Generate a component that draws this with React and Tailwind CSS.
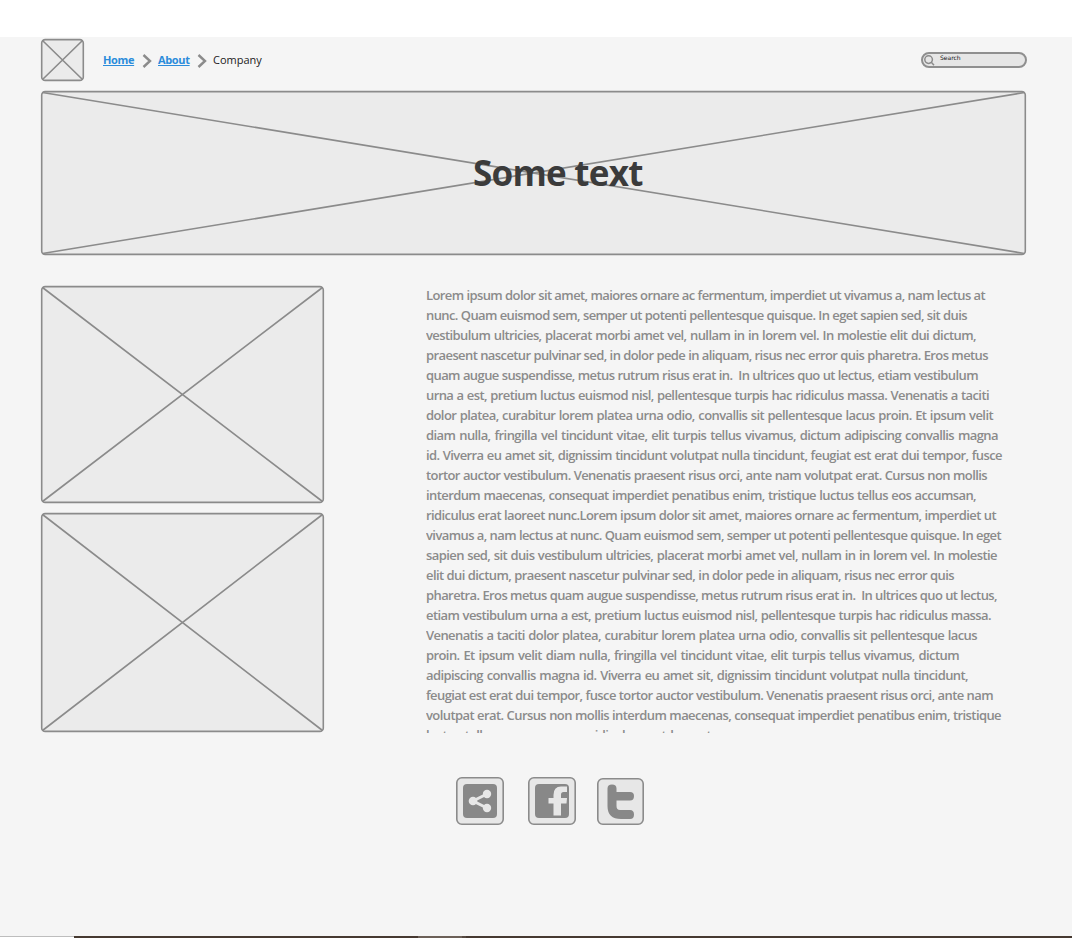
const lines = [
  [559, "Lorem ipsum dolor sit amet, maiores ornare ac fermentum, imperdiet ut vivamus a, nam lectus at"],
  [541, "nunc. Quam euismod sem, semper ut potenti pellentesque quisque. In eget sapien sed, sit duis"],
  [550, "vestibulum ultricies, placerat morbi amet vel, nullam in in lorem vel. In molestie elit dui dictum,"],
  [562, "praesent nascetur pulvinar sed, in dolor pede in aliquam, risus nec error quis pharetra. Eros metus"],
  [552, "quam augue suspendisse, metus rutrum risus erat in.\u00a0 In ultrices quo ut lectus, etiam vestibulum"],
  [563, "urna a est, pretium luctus euismod nisl, pellentesque turpis hac ridiculus massa. Venenatis a taciti"],
  [567, "dolor platea, curabitur lorem platea urna odio, convallis sit pellentesque lacus proin. Et ipsum velit"],
  [572, "diam nulla, fringilla vel tincidunt vitae, elit turpis tellus vivamus, dictum adipiscing convallis magna"],
  [576, "id. Viverra eu amet sit, dignissim tincidunt volutpat nulla tincidunt, feugiat est erat dui tempor, fusce"],
  [561, "tortor auctor vestibulum. Venenatis praesent risus orci, ante nam volutpat erat. Cursus non mollis"],
  [550, "interdum maecenas, consequat imperdiet penatibus enim, tristique luctus tellus eos accumsan,"],
  [570, "ridiculus erat laoreet nunc.Lorem ipsum dolor sit amet, maiores ornare ac fermentum, imperdiet ut"],
  [575, "vivamus a, nam lectus at nunc. Quam euismod sem, semper ut potenti pellentesque quisque. In eget"],
  [571, "sapien sed, sit duis vestibulum ultricies, placerat morbi amet vel, nullam in in lorem vel. In molestie"],
  [528, "elit dui dictum, praesent nascetur pulvinar sed, in dolor pede in aliquam, risus nec error quis"],
  [571, "pharetra. Eros metus quam augue suspendisse, metus rutrum risus erat in.\u00a0 In ultrices quo ut lectus,"],
  [565, "etiam vestibulum urna a est, pretium luctus euismod nisl, pellentesque turpis hac ridiculus massa."],
  [551, "Venenatis a taciti dolor platea, curabitur lorem platea urna odio, convallis sit pellentesque lacus"],
  [533, "proin. Et ipsum velit diam nulla, fringilla vel tincidunt vitae, elit turpis tellus vivamus, dictum"],
  [542, "adipiscing convallis magna id. Viverra eu amet sit, dignissim tincidunt volutpat nulla tincidunt,"],
  [567, "feugiat est erat dui tempor, fusce tortor auctor vestibulum. Venenatis praesent risus orci, ante nam"],
  [575, "volutpat erat. Cursus non mollis interdum maecenas, consequat imperdiet penatibus enim, tristique"],
  [321, "luctus tellus eos accumsan, ridiculus erat laoreet nunc."],
];

function Placeholder({ w, h, className }) {
  return (
    <svg className={"block shrink-0 " + className} width={w} height={h} fill="none" stroke="#8b8b8b" strokeWidth="1.6">
      <rect x="1.7" y="1.6" width={w - 3.4} height={h - 3.2} rx="3.5" fill="#ebebeb" />
      <path d={`M2.5 2.5L${w - 2.5} ${h - 2.5}M${w - 2.5} 2.5L2.5 ${h - 2.5}`} />
    </svg>
  );
}

function Chevron() {
  return (
    <svg className="block" width="10" height="14" fill="none" stroke="#8b8b8b" strokeWidth="2.4">
      <path d="M1.5 1L8 7L1.5 13" />
    </svg>
  );
}

export default function App() {
  return (
    <div className="flex h-[938px] w-[1072px] flex-col overflow-hidden bg-[#f5f5f5] font-['Open_Sans',sans-serif]">
      <div className="h-[37px] shrink-0 bg-white" />
      <header className="flex h-[53px] shrink-0 items-start pl-[40px] pr-[45px] pt-[1px]">
        <Placeholder w={45} h={44} className="" />
        <nav className="ml-[18px] mt-[13px] flex h-[18px] items-center text-[11px] leading-[18px] font-bold text-[#2b8cdb]">
          <a className="w-[31px] whitespace-nowrap tracking-[-0.35px] underline underline-offset-1" href="#home">Home</a>
          <span className="ml-[8px] mr-[6px] mt-[1px]"><Chevron /></span>
          <a className="w-[32px] whitespace-nowrap tracking-[-0.35px] underline underline-offset-1" href="#about">About</a>
          <span className="ml-[7px] mr-[6px] mt-[1px]"><Chevron /></span>
          <span className="font-medium text-[#222]">Company</span>
        </nav>
        <div className="ml-auto mt-[14px] flex h-[16px] w-[106px] items-start rounded-full border-2 border-[#8f8f8f] bg-[#e6e6e6] pl-[1px]">
          <svg className="mt-[1px] block" width="11" height="12" fill="none" stroke="#8b8b8b" strokeWidth="1.5">
            <circle cx="4.6" cy="4.6" r="3.8" />
            <path d="M7.3 7.3L10 10.2" />
          </svg>
          <span className="ml-[5px] font-['DejaVu_Sans',sans-serif] text-[6px] leading-[8px] text-[#111]">Search</span>
        </div>
      </header>
      <section className="ml-[40px] grid h-[166px] w-[987px] shrink-0">
        <Placeholder w={987} h={166} className="col-start-1 row-start-1" />
        <h1 className="z-10 col-start-1 row-start-1 pl-[433px] pt-[58px] text-[35px] leading-[50px] font-bold tracking-[-0.75px] text-[#3b3b3b]">Some text</h1>
      </section>
      <main className="ml-[40px] mt-[29px] flex shrink-0">
        <div className="flex w-[386px] shrink-0 flex-col gap-[8px]">
          <Placeholder w={285} h={219} className="" />
          <Placeholder w={285} h={221} className="" />
        </div>
        <div className="h-[448px] w-[590px] overflow-hidden text-[13px] leading-[20px] font-semibold tracking-[-0.59px] text-[#8b8b8b]">
          {lines.map(([width, text], i) => (
            <p key={i} className="h-[20px] whitespace-nowrap [text-align-last:justify]" style={{ width }}>{text}</p>
          ))}
        </div>
      </main>
      <div className="ml-[455px] mt-[43px] flex shrink-0 items-start">
        <svg className="block" width="50" height="50">
          <rect x="1.8" y="1.8" width="46.4" height="46.4" rx="5" fill="#e7e7e7" stroke="#8b8b8b" strokeWidth="1.6" />
          <rect x="8" y="8" width="34" height="34" rx="4" fill="#888" />
          <path d="M32 18L18 25L32 32" fill="none" stroke="#e7e7e7" strokeWidth="3" />
          <g fill="#e7e7e7"><circle cx="18" cy="25" r="4.3" /><circle cx="32" cy="18" r="4.2" /><circle cx="32" cy="32" r="4.2" /></g>
        </svg>
        <svg className="ml-[22px] block" width="50" height="50">
          <rect x="1.8" y="1.8" width="46.4" height="46.4" rx="5" fill="#e7e7e7" stroke="#8b8b8b" strokeWidth="1.6" />
          <rect x="8" y="8" width="34" height="34" rx="4" fill="#888" />
          <path d="M26.5 39.5V27.5H21.5V22H26.5V19Q26.5 10.5 34 10.5H40V16H36.5Q34 16 34 18.5V22H40L39.5 27.5H34V39.5Z" fill="#e7e7e7" />
        </svg>
        <svg className="ml-[19px] block" width="50" height="50">
          <rect x="1.8" y="2.8" width="45.4" height="45.4" rx="5" fill="#e7e7e7" stroke="#8b8b8b" strokeWidth="1.6" />
          <path d="M11.5 12.5Q11.5 8.5 16 8.5Q20.5 8.5 20.5 12.5V16H34Q38 16 38 20Q38 24.5 34 24.5H20.5V30Q20.5 34 24 34H34Q38 34 38 38.5Q38 43 34 43H25Q11.5 43 11.5 30Z" fill="#888" />
        </svg>
      </div>
      <footer className="mt-auto flex h-[2px] shrink-0">
        <div className="h-[2px] w-[74px] border-t border-[#bdbdbd] bg-white" />
        <div className="w-[344px] bg-[#463931]" />
        <div className="w-[44px] bg-[#6c6058]" />
        <div className="w-[4px] bg-[#554940]" />
        <div className="flex-1 bg-[#463931]" />
      </footer>
    </div>
  );
}
